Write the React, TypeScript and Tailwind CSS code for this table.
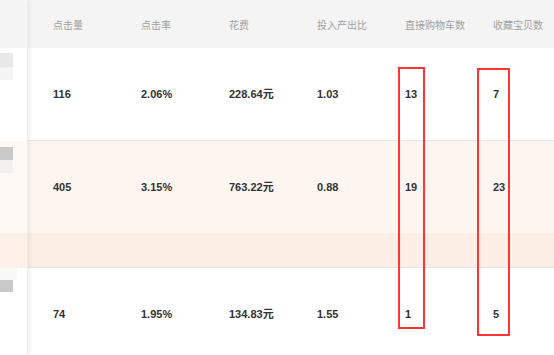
import React from "react";

const headers = ["点击量", "点击率", "花费", "投入产出比", "直接购物车数", "收藏宝贝数"];

const rows = [
  ["116", "2.06%", "228.64元", "1.03", "13", "7"],
  ["405", "3.15%", "763.22元", "0.88", "19", "23"],
  ["74", "1.95%", "134.83元", "1.55", "1", "5"],
];

const Cells = ({ values, head }: { values: string[]; head?: boolean }) => (
  <div className={head ? "flex h-full items-center pt-[3px]" : "flex h-full items-center"}>
    {values.map((v) => (
      <div
        key={v}
        className={
          head
            ? "w-[88px] shrink-0 whitespace-nowrap pl-[25px] text-[10px] text-[#a0a0a0]"
            : "w-[88px] shrink-0 whitespace-nowrap pl-[25px] text-[11px] font-bold text-[#333]"
        }
      >
        {v}
      </div>
    ))}
  </div>
);

const App = () => {
  return (
    <div
      className="relative flex h-[355px] w-[554px] overflow-hidden bg-white"
      style={{ fontFamily: '"Liberation Sans", "Noto Sans CJK SC", sans-serif' }}
    >
      {/* fixed left column, cut off */}
      <div className="relative z-10 flex w-[28px] shrink-0 flex-col border-r border-[#ececec] shadow-[2px_0_4px_rgba(0,0,0,0.06)]">
        <div className="h-[48px] shrink-0 bg-[#f4f4f4]" />
        <div className="flex h-[93px] shrink-0 flex-col bg-white pt-[5px]">
          <div className="h-[14px] w-[13px] bg-[#e8e8e8]" />
          <div className="h-[13px] w-[13px] bg-[#f4f4f4]" />
        </div>
        <div className="flex h-[92px] shrink-0 flex-col bg-[#fdf8f4] pt-[6px]">
          <div className="h-[13px] w-[13px] bg-[#c9c9c9]" />
          <div className="h-[13px] w-[13px] bg-[#f3efec]" />
        </div>
        <div className="h-[35px] shrink-0 bg-[#fdf0e8]" />
        <div className="flex h-[93px] shrink-0 flex-col bg-white">
          <div className="h-[12px] w-[17px] bg-[#f8f8f8]" />
          <div className="h-[12px] w-[13px] bg-[#c9c9c9]" />
        </div>
      </div>

      {/* table */}
      <div className="flex flex-1 flex-col">
        <div className="h-[48px] shrink-0 bg-[#f4f4f4]">
          <Cells values={headers} head />
        </div>
        <div className="h-[93px] shrink-0 border-b border-[#e6e6e6] bg-white">
          <Cells values={rows[0]} />
        </div>
        <div className="h-[92px] shrink-0 bg-[#fdf6f0]">
          <Cells values={rows[1]} />
        </div>
        <div className="h-[35px] shrink-0 border-b border-[#e6e6e6] bg-[#fdeee5]" />
        <div className="h-[93px] shrink-0 bg-white">
          <Cells values={rows[2]} />
        </div>
      </div>

      {/* red annotation boxes */}
      <div className="absolute left-[398px] top-[67px] h-[262px] w-[27px] border-2 border-[#ff3535]" />
      <div className="absolute left-[477px] top-[68px] h-[268px] w-[33px] border-2 border-[#ff3535]" />
    </div>
  );
};

export default App;
